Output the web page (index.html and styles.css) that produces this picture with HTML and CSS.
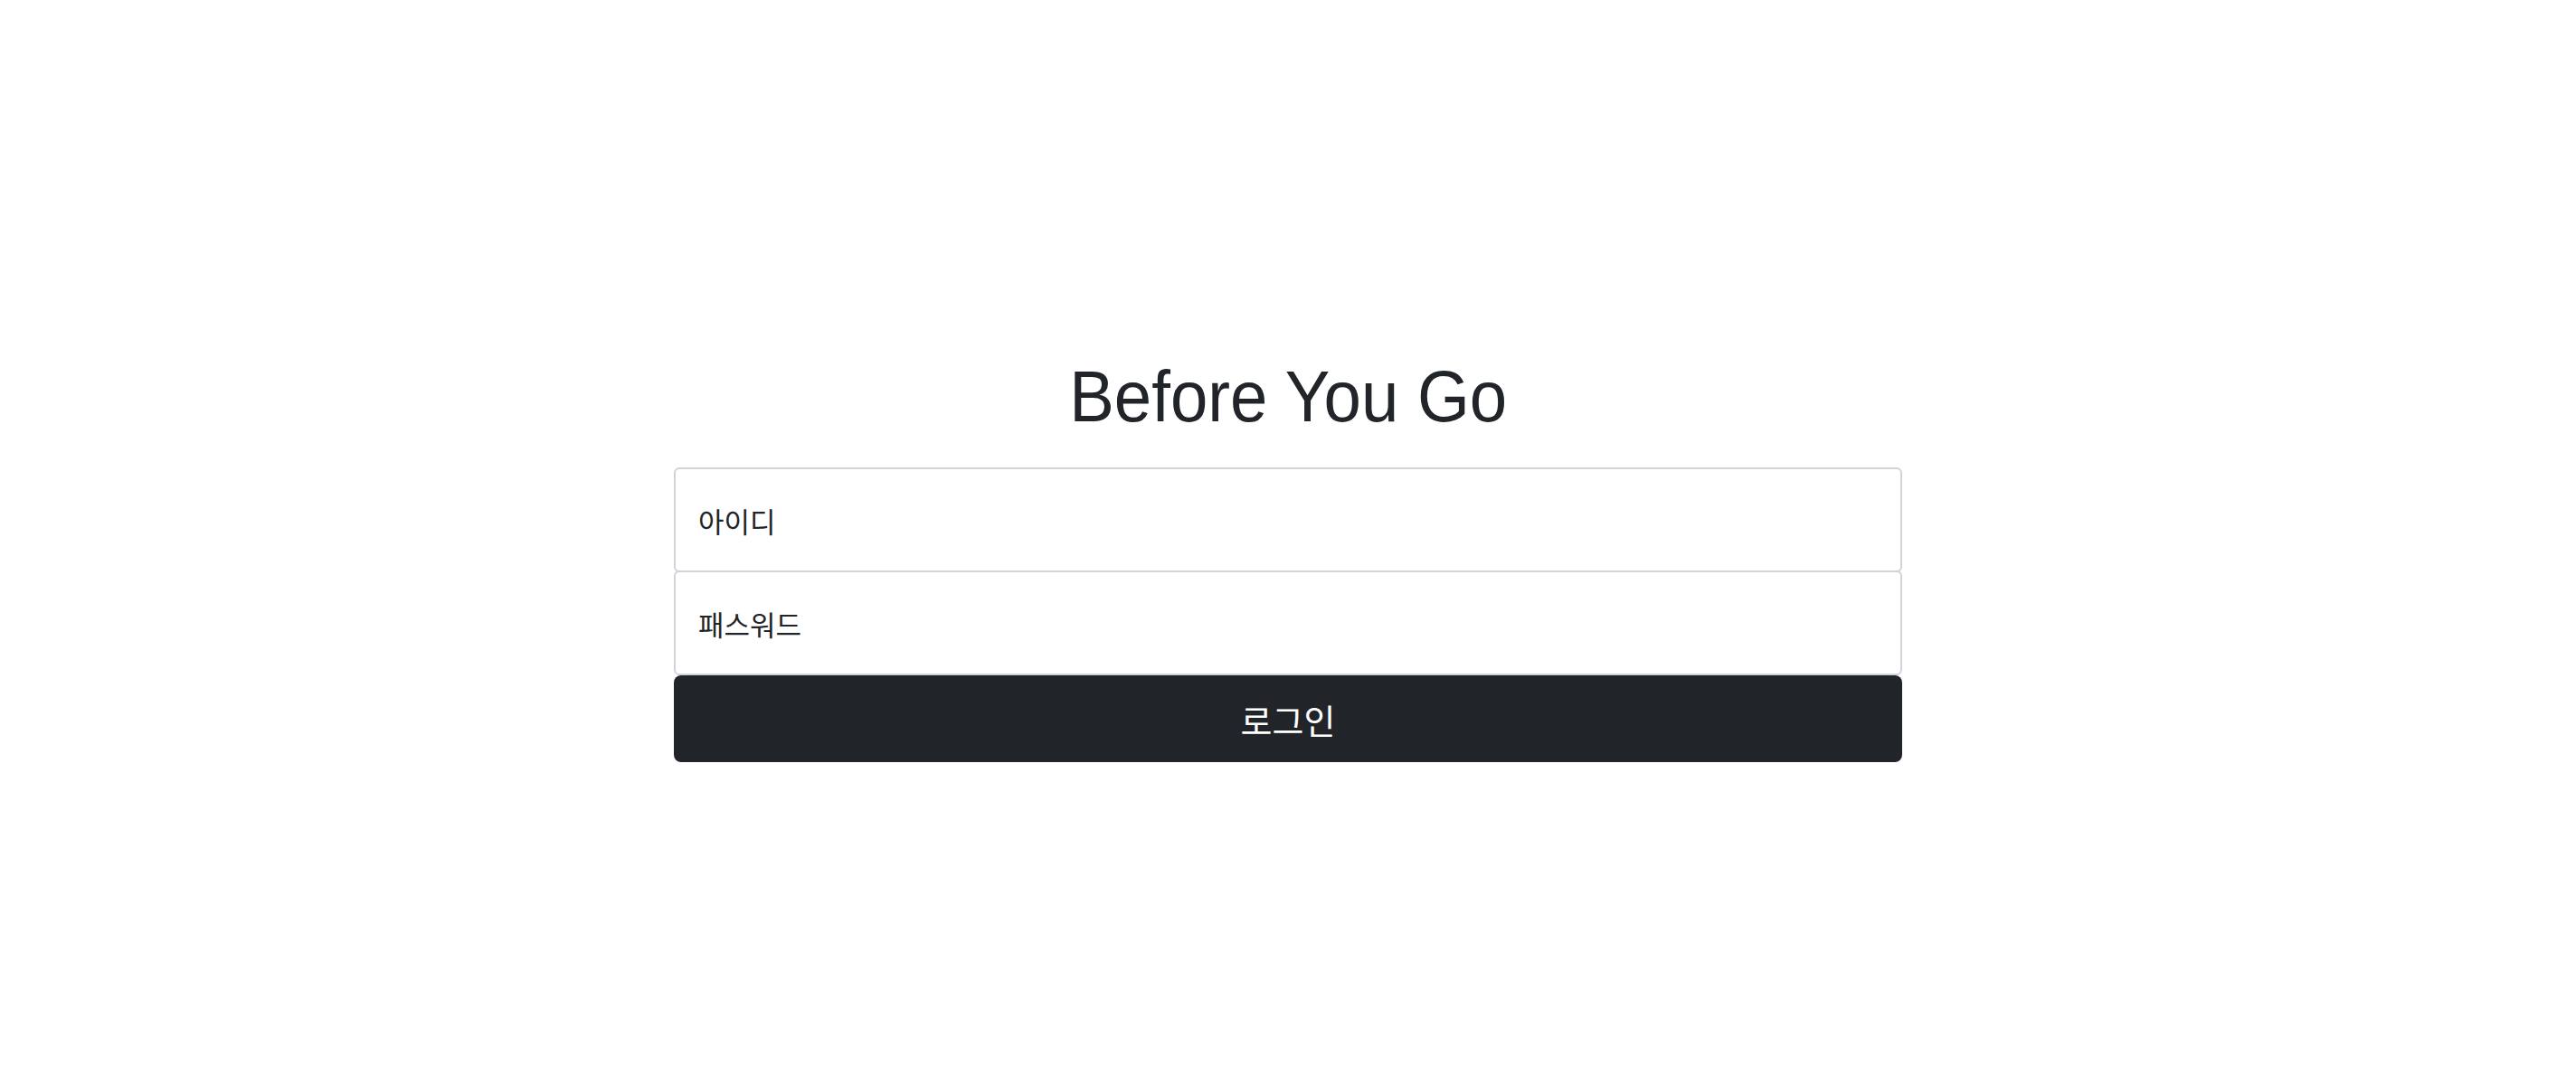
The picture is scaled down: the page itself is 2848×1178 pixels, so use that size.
FILE: index.html
```html
<!DOCTYPE html>
<html lang="ko">
<head>
<meta charset="utf-8">
<title>Before You Go</title>
<link rel="stylesheet" href="styles.css">
</head>
<body>
<main class="signin">
  <h1 class="title">Before You Go</h1>
  <form class="form">
    <input class="field field-top" type="text" placeholder="아이디">
    <input class="field field-bottom" type="password" placeholder="패스워드">
    <button class="btn" type="button">로그인</button>
  </form>
</main>
</body>
</html>
```
FILE: styles.css
```css
html, body {
  margin: 0;
  padding: 0;
  background: #ffffff;
}
body {
  font-family: "Noto Sans CJK KR", "Noto Sans", sans-serif;
  color: #212529;
}
.signin {
  display: flex;
  flex-direction: column;
  align-items: center;
  padding-top: 391px;
}
.title {
  margin: 0 0 30px 0;
  font-family: "Liberation Sans", Arial, sans-serif;
  font-size: 80px;
  font-weight: 400;
  line-height: 96px;
  color: #212529;
  transform: scaleX(0.93);
  transform-origin: center;
}
.form {
  width: 1358px;
  display: flex;
  flex-direction: column;
}
.field {
  box-sizing: border-box;
  height: 116px;
  border: 2px solid #ced4da;
  border-radius: 6px;
  padding: 0 25px;
  font-family: "Noto Sans CJK KR", "Noto Sans", sans-serif;
  font-size: 31px;
  color: #212529;
  background: #fff;
  outline: none;
}
.field::placeholder {
  color: #212529;
  opacity: 1;
}
.field-top {
  margin-bottom: -2px;
}
.btn {
  box-sizing: border-box;
  height: 96px;
  border: 0;
  border-radius: 8px;
  background: #212529;
  color: #fff;
  font-family: "Noto Sans CJK KR", "Noto Sans", sans-serif;
  font-size: 38px;
  cursor: pointer;
}
```
